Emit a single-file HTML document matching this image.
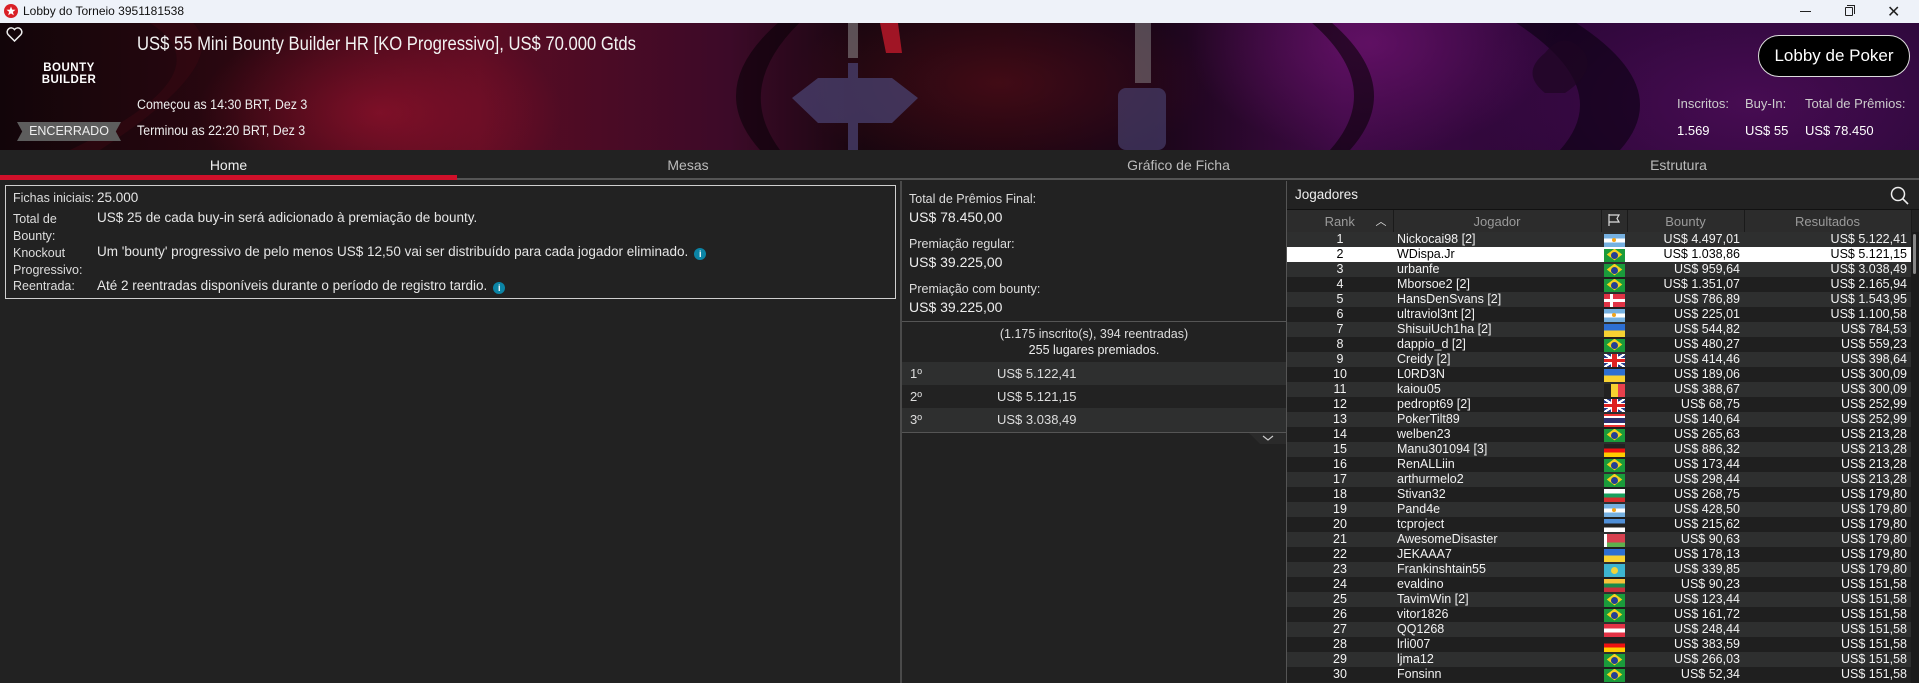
<!DOCTYPE html>
<html><head><meta charset="utf-8"><style>
*{margin:0;padding:0;box-sizing:border-box}
body{width:1919px;height:683px;overflow:hidden;background:#222;font-family:"Liberation Sans",sans-serif;color:#ddd;position:relative}
.abs{position:absolute}
.n{font-family:"Liberation Sans Narrow","Liberation Sans",sans-serif}
#tb{left:0;top:0;width:1919px;height:23px;background:#eef2f9;color:#111;font-size:12px}
#hd{left:0;top:23px;width:1919px;height:127px;overflow:hidden;
background:
radial-gradient(ellipse 260px 140px at 380px 90px,rgba(170,20,50,.55),transparent 70%),
radial-gradient(ellipse 300px 130px at 1000px 60px,rgba(90,15,25,.6),transparent 70%),
radial-gradient(ellipse 260px 160px at 1370px 20px,rgba(120,20,120,.6),transparent 70%),
radial-gradient(ellipse 400px 200px at 1750px 80px,rgba(90,15,100,.6),transparent 70%),
linear-gradient(90deg,#120509 0%,#2a0710 12%,#5a0c22 25%,#3c0a28 38%,#18060f 45%,#1c0510 52%,#1a0518 60%,#3d0a45 70%,#2a0636 82%,#2a0838 100%)}
.tab{top:150px;height:30px;font-size:14px;color:#bbb;text-align:center;line-height:30px}
.lbl{font-size:12.5px;color:#ddd}
.val{font-size:13.5px;color:#e6e6e6}
.sx{transform-origin:0 0}
.info{display:inline-block;width:12px;height:12px;border-radius:50%;background:#0b84a5;color:#fff;font-size:9px;text-align:center;line-height:12px;font-weight:bold;vertical-align:-1px;margin-left:6px}
table{border-collapse:collapse;font-size:12.5px}
#pt{position:absolute;left:1287px;top:210px;width:624px;table-layout:fixed}
#pt th{height:22px;background:#2c2c2c;color:#9a9a9a;font-weight:normal;font-size:13px;border-right:1px solid #1a1a1a}
#pt td{height:15px;line-height:15px;padding:0;white-space:nowrap;color:#f2f2f2}
#pt tr:nth-child(even) td{background:#2e2f2f}
#pt tr:nth-child(odd) td{background:#1f1f1f}
#pt tr.sel td{background:#fff;color:#000}
.c{text-align:center}.r{text-align:right;padding-right:4px!important}.l{padding-left:4px!important}
.f{display:block;width:21px;height:13px;margin:1px auto 0;position:relative;overflow:hidden}
.br{background:#1a9b3b}.br:before{content:"";position:absolute;left:5px;top:0.5px;width:11px;height:11px;background:#f3d21f;transform:scale(1,.75) rotate(45deg)}
.br:after{content:"";position:absolute;left:7px;top:3px;width:7px;height:7px;border-radius:50%;background:#233f94}
.ar{background:linear-gradient(#75b0e0 33%,#fff 33% 66%,#75b0e0 66%)}.ar:after{content:"";position:absolute;left:8.5px;top:4.5px;width:4px;height:4px;border-radius:50%;background:#f2a51d}
.dk{background:linear-gradient(90deg,transparent 6px,#fff 6px 9px,transparent 9px),linear-gradient(transparent 5px,#fff 5px 8px,transparent 8px),#e03345}
.ua{background:linear-gradient(#2d6fd2 50%,#f7d232 50%)}
.gb{background:linear-gradient(90deg,transparent 8px,#d22 8px 13px,transparent 13px),linear-gradient(transparent 5px,#d22 5px 8px,transparent 8px),linear-gradient(90deg,transparent 7px,#fff 7px 14px,transparent 14px),linear-gradient(transparent 4px,#fff 4px 9px,transparent 9px),linear-gradient(33deg,transparent 45%,#fff 45% 55%,transparent 55%),linear-gradient(-33deg,transparent 45%,#fff 45% 55%,transparent 55%),#263d8c}
.be{background:linear-gradient(90deg,#222 33%,#f5d130 33% 66%,#e8404c 66%)}
.th{background:linear-gradient(#e33 15%,#fff 15% 30%,#2c2f6c 30% 70%,#fff 70% 85%,#e33 85%)}
.de{background:linear-gradient(#222 33%,#e11 33% 66%,#fc0 66%)}
.bg{background:linear-gradient(#fff 33%,#17a05d 33% 66%,#d62f2f 66%)}
.ee{background:linear-gradient(#4f8fd8 33%,#222 33% 66%,#fff 66%)}
.by{background:linear-gradient(90deg,#fff 3px,transparent 3px),linear-gradient(#d8404f 66%,#5db04d 66%)}
.kz{background:#3db5d0}.kz:after{content:"";position:absolute;left:7px;top:3px;width:7px;height:7px;border-radius:50%;background:#f0d43a}
.lt{background:linear-gradient(#f7c23a 33%,#1a8a4b 33% 66%,#c8303c 66%)}
.at{background:linear-gradient(#e33245 33%,#fff 33% 66%,#e33245 66%)}
</style></head><body>
<div id="tb" class="abs">
 <svg class="abs" style="left:4px;top:4px" width="14" height="14" viewBox="0 0 14 14"><circle cx="7" cy="7" r="7" fill="#d91f26"/><path d="M7 2.5 L8.2 5.6 L11.5 5.8 L8.9 7.9 L9.8 11.2 L7 9.4 L4.2 11.2 L5.1 7.9 L2.5 5.8 L5.8 5.6Z" fill="#fff"/></svg>
 <div class="abs" style="left:23px;top:4px">Lobby do Torneio 3951181538</div>
 <div class="abs" style="left:1800px;top:11px;width:11px;height:1px;background:#222"></div>
 <div class="abs" style="left:1845px;top:7px;width:8px;height:9px;border:1px solid #222;border-radius:1px"></div>
 <div class="abs" style="left:1847px;top:5px;width:8px;height:9px;border-top:1px solid #222;border-right:1px solid #222"></div>
 <div class="abs" style="left:1887px;top:2px;font-size:16px;color:#222">✕</div>
</div>
<div id="hd" class="abs">
 <svg class="abs" style="left:0;top:0" width="1919" height="127">
  <path d="M100 127 Q250 30 180 -10 L150 0 Q230 50 70 127Z" fill="#3a0712" opacity=".5"/>
  <path d="M1500 -10 Q1620 60 1560 127 L1620 127 Q1680 60 1560 -10Z" fill="#0a0210" opacity=".6"/>
  <path d="M790 -10 Q700 60 760 127 L780 127 Q730 60 810 -10Z" fill="#0a0208" opacity=".6"/>
  <path d="M1300 -10 Q1390 60 1330 127 L1350 127 Q1410 60 1320 -10Z" fill="#0a0208" opacity=".6"/>
  <path d="M792 75 L818 55 L848 55 L848 40 L858 40 L858 55 L892 55 L918 75 L892 100 L858 100 L858 127 L848 127 L848 100 L818 100Z" fill="#4a4270" opacity=".75"/>
  <path d="M848 0 L858 0 L858 35 L848 35Z" fill="#999" opacity=".5"/>
  <path d="M880 0 L898 0 L902 30 L886 30Z" fill="#a01525"/>
  <rect x="1135" y="0" width="16" height="60" fill="#999" opacity=".45"/>
  <rect x="1118" y="65" width="48" height="62" rx="8" fill="#4a4270" opacity=".65"/>
  <path d="M1545 30 q20 -25 40 0 q10 20 -20 40 l-20 0 q-25 -20 0 -40Z" fill="#1e0522" opacity=".7"/>
 </svg>
 <svg class="abs" style="left:6px;top:4px" width="17" height="15" viewBox="0 0 17 15"><path d="M8.5 14 L2 7.5 A3.8 3.8 0 0 1 8.5 2.5 A3.8 3.8 0 0 1 15 7.5Z" fill="none" stroke="#eee" stroke-width="1.5"/></svg>
 <div class="abs" style="left:33px;top:39px;width:72px;color:#fff;font-weight:bold;font-size:11.5px;line-height:12px;text-align:center;letter-spacing:.5px">BOUNTY<br>BUILDER</div>
 <div class="abs n sx" style="left:137px;top:11px;font-size:19px;color:#f2f2f2;white-space:nowrap;transform:scaleX(.875)">US$ 55 Mini Bounty Builder HR [KO Progressivo], US$ 70.000 Gtds</div>
 <div class="abs n sx" style="left:137px;top:74px;font-size:13.5px;color:#eee;white-space:nowrap;transform:scaleX(.92)">Começou as 14:30 BRT, Dez 3</div>
 <div class="abs n sx" style="left:137px;top:100px;font-size:13.5px;color:#eee;white-space:nowrap;transform:scaleX(.92)">Terminou as 22:20 BRT, Dez 3</div>
 <div class="abs n" style="left:17px;top:99px;width:104px;height:19px;background:#5d5d5d;clip-path:polygon(0 0,100% 0,95% 50%,100% 100%,0 100%,5% 50%);color:#eee;font-size:12.5px;text-align:center;line-height:19px">ENCERRADO</div>
 <div class="abs n" style="left:1758px;top:12px;width:152px;height:42px;border:1.5px solid #ddd;border-radius:21px;background:#000;color:#fff;font-size:17px;text-align:center;line-height:39px">Lobby de Poker</div>
 <div class="abs n" style="left:1677px;top:73px;font-size:13px;color:#ccc">Inscritos:</div>
 <div class="abs n" style="left:1745px;top:73px;font-size:13px;color:#ccc">Buy-In:</div>
 <div class="abs n" style="left:1805px;top:73px;font-size:13px;color:#ccc">Total de Prêmios:</div>
 <div class="abs n" style="left:1677px;top:100px;font-size:13px;color:#fff">1.569</div>
 <div class="abs n" style="left:1745px;top:100px;font-size:13px;color:#fff">US$ 55</div>
 <div class="abs n" style="left:1805px;top:100px;font-size:13px;color:#fff">US$ 78.450</div>
</div>
<div class="abs" style="left:0;top:150px;width:1919px;height:30px;background:#222"></div>
<div class="abs tab n" style="left:0;width:457px;color:#eee">Home</div>
<div class="abs tab n" style="left:457px;width:462px">Mesas</div>
<div class="abs tab n" style="left:919px;width:519px">Gráfico de Ficha</div>
<div class="abs tab n" style="left:1438px;width:481px">Estrutura</div>
<div class="abs" style="left:457px;top:178px;width:1462px;height:2px;background:#555"></div>
<div class="abs" style="left:0;top:175px;width:457px;height:5px;background:#d0102a"></div>

<div class="abs" style="left:5px;top:185px;width:891px;height:114px;border:1px solid #cfcfcf"></div>
<div class="abs n lbl" style="left:13px;top:191px">Fichas iniciais:</div><div class="abs n val" style="left:97px;top:190px">25.000</div>
<div class="abs n lbl" style="left:13px;top:211px;line-height:17px">Total de<br>Bounty:</div><div class="abs n val" style="left:97px;top:210px">US$ 25 de cada buy-in será adicionado à premiação de bounty.</div>
<div class="abs n lbl" style="left:13px;top:245px;line-height:17px">Knockout<br>Progressivo:</div><div class="abs n val" style="left:97px;top:244px">Um 'bounty' progressivo de pelo menos US$ 12,50 vai ser distribuído para cada jogador eliminado.<span class="info">i</span></div>
<div class="abs n lbl" style="left:13px;top:279px">Reentrada:</div><div class="abs n val" style="left:97px;top:278px">Até 2 reentradas disponíveis durante o período de registro tardio.<span class="info">i</span></div>

<div class="abs" style="left:900px;top:181px;width:2px;height:502px;background:#4a4a4a"></div>
<div class="abs n" style="left:909px;top:192px;font-size:12.5px;color:#ddd">Total de Prêmios Final:</div>
<div class="abs n" style="left:909px;top:209px;font-size:14px;color:#eee">US$ 78.450,00</div>
<div class="abs n" style="left:909px;top:237px;font-size:12.5px;color:#ddd">Premiação regular:</div>
<div class="abs n" style="left:909px;top:254px;font-size:14px;color:#eee">US$ 39.225,00</div>
<div class="abs n" style="left:909px;top:282px;font-size:12.5px;color:#ddd">Premiação com bounty:</div>
<div class="abs n" style="left:909px;top:299px;font-size:14px;color:#eee">US$ 39.225,00</div>
<div class="abs" style="left:902px;top:321px;width:384px;height:1px;background:#555"></div>
<div class="abs n" style="left:902px;top:326px;width:384px;text-align:center;font-size:12.5px;line-height:16px;color:#ddd">(1.175 inscrito(s), 394 reentradas)<br><span style="color:#eee">255 lugares premiados.</span></div>
<div class="abs n" style="left:902px;top:362px;width:384px;height:23px;background:#2e2f2f"></div>
<div class="abs n" style="left:902px;top:408px;width:384px;height:24px;background:#2e2f2f"></div>
<div class="abs n" style="left:910px;top:366px;font-size:13px">1º</div><div class="abs n" style="left:997px;top:366px;font-size:13px">US$ 5.122,41</div>
<div class="abs n" style="left:910px;top:389px;font-size:13px">2º</div><div class="abs n" style="left:997px;top:389px;font-size:13px">US$ 5.121,15</div>
<div class="abs n" style="left:910px;top:412px;font-size:13px">3º</div><div class="abs n" style="left:997px;top:412px;font-size:13px">US$ 3.038,49</div>
<div class="abs" style="left:902px;top:432px;width:384px;height:1px;background:#555"></div>
<div class="abs" style="left:1249px;top:433px;width:37px;height:11px;background:#2a2a2a;clip-path:polygon(0 0,100% 0,100% 100%,30% 100%)"></div>
<svg class="abs" style="left:1262px;top:435px" width="12" height="7"><path d="M1 1 L6 5 L11 1" stroke="#ccc" fill="none" stroke-width="1.2"/></svg>

<div class="abs" style="left:1286px;top:181px;width:1px;height:502px;background:#555"></div>
<div class="abs" style="left:1287px;top:181px;width:632px;height:29px;background:#222;border-bottom:1px solid #111"></div>
<div class="abs n" style="left:1295px;top:187px;font-size:13.5px;color:#eee">Jogadores</div>
<svg class="abs" style="left:1890px;top:186px" width="20" height="20"><circle cx="8" cy="8" r="6.5" stroke="#eee" stroke-width="1.5" fill="none"/><path d="M13 13 L18 18" stroke="#eee" stroke-width="1.6"/></svg>
<div class="abs" style="left:1911px;top:232px;width:8px;height:451px;background:#1b1b1b"></div>
<div class="abs" style="left:1913px;top:234px;width:3px;height:40px;background:#888;border-radius:2px"></div>
<table id="pt">
<colgroup><col style="width:106px"><col style="width:208px"><col style="width:26px"><col style="width:117px"><col style="width:167px"></colgroup>
<tr><th style="position:relative">Rank<span style="position:absolute;right:6px;top:3px;color:#ddd;font-size:11px">︿</span></th><th>Jogador</th><th><svg width="14" height="14"><path d="M2 1 V13 M2 2 H12 L10 5.5 L12 9 H2" stroke="#ddd" fill="none" stroke-width="1.2"/></svg></th><th>Bounty</th><th>Resultados</th></tr>
<tr><td class="c">1</td><td class="l">Nickocai98 [2]</td><td><i class="f ar"></i></td><td class="r">US$ 4.497,01</td><td class="r">US$ 5.122,41</td></tr>
<tr class="sel"><td class="c">2</td><td class="l">WDispa.Jr</td><td><i class="f br"></i></td><td class="r">US$ 1.038,86</td><td class="r">US$ 5.121,15</td></tr>
<tr><td class="c">3</td><td class="l">urbanfe</td><td><i class="f br"></i></td><td class="r">US$ 959,64</td><td class="r">US$ 3.038,49</td></tr>
<tr><td class="c">4</td><td class="l">Mborsoe2 [2]</td><td><i class="f br"></i></td><td class="r">US$ 1.351,07</td><td class="r">US$ 2.165,94</td></tr>
<tr><td class="c">5</td><td class="l">HansDenSvans [2]</td><td><i class="f dk"></i></td><td class="r">US$ 786,89</td><td class="r">US$ 1.543,95</td></tr>
<tr><td class="c">6</td><td class="l">ultraviol3nt [2]</td><td><i class="f ar"></i></td><td class="r">US$ 225,01</td><td class="r">US$ 1.100,58</td></tr>
<tr><td class="c">7</td><td class="l">ShisuiUch1ha [2]</td><td><i class="f ua"></i></td><td class="r">US$ 544,82</td><td class="r">US$ 784,53</td></tr>
<tr><td class="c">8</td><td class="l">dappio_d [2]</td><td><i class="f br"></i></td><td class="r">US$ 480,27</td><td class="r">US$ 559,23</td></tr>
<tr><td class="c">9</td><td class="l">Creidy [2]</td><td><i class="f gb"></i></td><td class="r">US$ 414,46</td><td class="r">US$ 398,64</td></tr>
<tr><td class="c">10</td><td class="l">L0RD3N</td><td><i class="f ua"></i></td><td class="r">US$ 189,06</td><td class="r">US$ 300,09</td></tr>
<tr><td class="c">11</td><td class="l">kaiou05</td><td><i class="f be"></i></td><td class="r">US$ 388,67</td><td class="r">US$ 300,09</td></tr>
<tr><td class="c">12</td><td class="l">pedropt69 [2]</td><td><i class="f gb"></i></td><td class="r">US$ 68,75</td><td class="r">US$ 252,99</td></tr>
<tr><td class="c">13</td><td class="l">PokerTilt89</td><td><i class="f th"></i></td><td class="r">US$ 140,64</td><td class="r">US$ 252,99</td></tr>
<tr><td class="c">14</td><td class="l">welben23</td><td><i class="f br"></i></td><td class="r">US$ 265,63</td><td class="r">US$ 213,28</td></tr>
<tr><td class="c">15</td><td class="l">Manu301094 [3]</td><td><i class="f de"></i></td><td class="r">US$ 886,32</td><td class="r">US$ 213,28</td></tr>
<tr><td class="c">16</td><td class="l">RenALLiin</td><td><i class="f br"></i></td><td class="r">US$ 173,44</td><td class="r">US$ 213,28</td></tr>
<tr><td class="c">17</td><td class="l">arthurmelo2</td><td><i class="f br"></i></td><td class="r">US$ 298,44</td><td class="r">US$ 213,28</td></tr>
<tr><td class="c">18</td><td class="l">Stivan32</td><td><i class="f bg"></i></td><td class="r">US$ 268,75</td><td class="r">US$ 179,80</td></tr>
<tr><td class="c">19</td><td class="l">Pand4e</td><td><i class="f ar"></i></td><td class="r">US$ 428,50</td><td class="r">US$ 179,80</td></tr>
<tr><td class="c">20</td><td class="l">tcproject</td><td><i class="f ee"></i></td><td class="r">US$ 215,62</td><td class="r">US$ 179,80</td></tr>
<tr><td class="c">21</td><td class="l">AwesomeDisaster</td><td><i class="f by"></i></td><td class="r">US$ 90,63</td><td class="r">US$ 179,80</td></tr>
<tr><td class="c">22</td><td class="l">JEKAAA7</td><td><i class="f ua"></i></td><td class="r">US$ 178,13</td><td class="r">US$ 179,80</td></tr>
<tr><td class="c">23</td><td class="l">Frankinshtain55</td><td><i class="f kz"></i></td><td class="r">US$ 339,85</td><td class="r">US$ 179,80</td></tr>
<tr><td class="c">24</td><td class="l">evaldino</td><td><i class="f lt"></i></td><td class="r">US$ 90,23</td><td class="r">US$ 151,58</td></tr>
<tr><td class="c">25</td><td class="l">TavimWin [2]</td><td><i class="f br"></i></td><td class="r">US$ 123,44</td><td class="r">US$ 151,58</td></tr>
<tr><td class="c">26</td><td class="l">vitor1826</td><td><i class="f br"></i></td><td class="r">US$ 161,72</td><td class="r">US$ 151,58</td></tr>
<tr><td class="c">27</td><td class="l">QQ1268</td><td><i class="f at"></i></td><td class="r">US$ 248,44</td><td class="r">US$ 151,58</td></tr>
<tr><td class="c">28</td><td class="l">lrli007</td><td><i class="f de"></i></td><td class="r">US$ 383,59</td><td class="r">US$ 151,58</td></tr>
<tr><td class="c">29</td><td class="l">ljma12</td><td><i class="f br"></i></td><td class="r">US$ 266,03</td><td class="r">US$ 151,58</td></tr>
<tr><td class="c">30</td><td class="l">Fonsinn</td><td><i class="f br"></i></td><td class="r">US$ 52,34</td><td class="r">US$ 151,58</td></tr>
</table>
</body></html>
